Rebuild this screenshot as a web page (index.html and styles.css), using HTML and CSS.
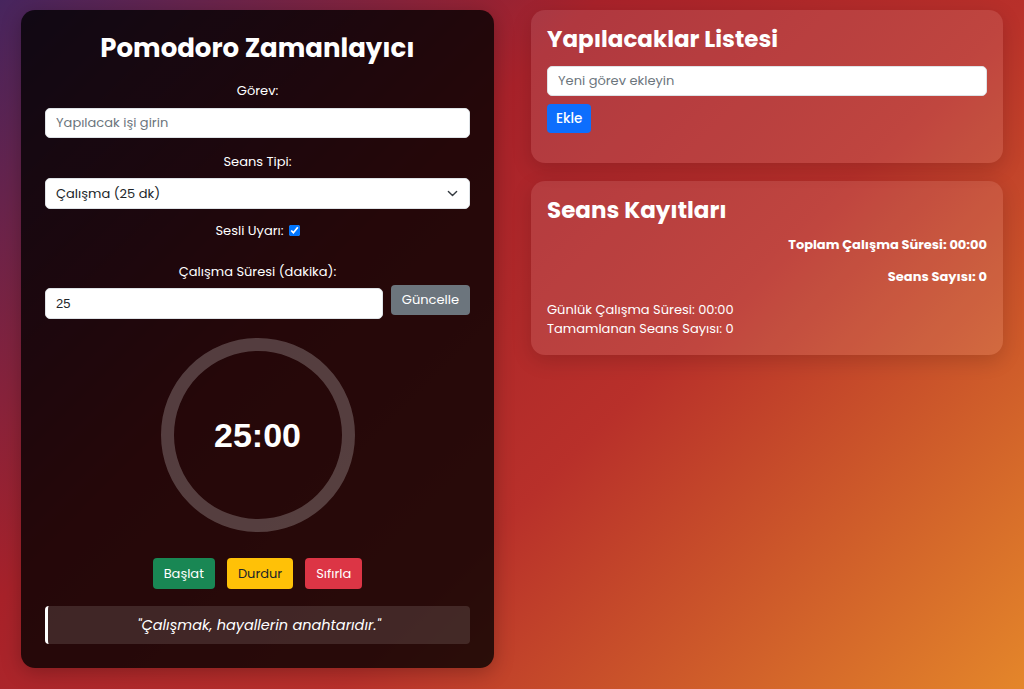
FILE: index.html
```html
<!DOCTYPE html>
<html lang="tr">
<head>
  <meta charset="UTF-8" />
  <meta name="viewport" content="width=device-width, initial-scale=1.0"/>
  <title>Pomodoro Zamanlayıcı</title>
  <link rel="stylesheet" href="styles.css">
</head>
<body>
  <div class="page">
    <div class="timer-card">
      <h1>Pomodoro Zamanlayıcı</h1>

      <label for="task">Görev:</label>
      <input type="text" id="task" placeholder="Yapılacak işi girin">

      <label for="session">Seans Tipi:</label>
      <div class="select-wrap">
        <select id="session">
          <option>Çalışma (25 dk)</option>
          <option>Kısa Mola (5 dk)</option>
          <option>Uzun Mola (15 dk)</option>
        </select>
        <svg class="chevron" width="11" height="11" viewBox="0 0 16 16">
          <path d="M2 5l6 6 6-6" fill="none" stroke="#343a40" stroke-width="2" stroke-linecap="round" stroke-linejoin="round"/>
        </svg>
      </div>

      <div class="sound-row">
        <label for="sound">Sesli Uyarı:</label>
        <input type="checkbox" id="sound" checked>
      </div>

      <label for="minutes">Çalışma Süresi (dakika):</label>
      <div class="duration-row">
        <input type="number" id="minutes" value="25">
        <button class="btn btn-gray">Güncelle</button>
      </div>

      <div class="ring">
        <span class="time">25:00</span>
      </div>

      <div class="controls">
        <button class="btn btn-green">Başlat</button>
        <button class="btn btn-yellow">Durdur</button>
        <button class="btn btn-red">Sıfırla</button>
      </div>

      <div class="quote">"Çalışmak, hayallerin anahtarıdır."</div>
    </div>

    <div class="side">
      <div class="glass-card todo">
        <h2>Yapılacaklar Listesi</h2>
        <input type="text" placeholder="Yeni görev ekleyin">
        <button class="btn btn-blue">Ekle</button>
      </div>

      <div class="glass-card">
        <h2>Seans Kayıtları</h2>
        <p class="stat">Toplam Çalışma Süresi: 00:00</p>
        <p class="stat">Seans Sayısı: 0</p>
        <div class="daily">
          <div>Günlük Çalışma Süresi: 00:00</div>
          <div>Tamamlanan Seans Sayısı: 0</div>
        </div>
      </div>
    </div>
  </div>
</body>
</html>
```

FILE: styles.css
```css
* {
  box-sizing: border-box;
}

body {
  margin: 0;
  min-height: 100vh;
  font-family: 'Poppins', 'Open Sans', sans-serif;
  color: #fff;
  background: linear-gradient(135deg, #47255e 0%, #a8222a 35%, #b8302a 60%, #e4862a 100%);
}

.page {
  display: flex;
  gap: 37px;
  padding: 10px 21px 20px 21px;
  align-items: flex-start;
}

.timer-card {
  flex: 0 0 473px;
  background-color: rgba(0, 0, 0, 0.78);
  border-radius: 14px;
  padding: 19px 24px 24px;
  display: flex;
  flex-direction: column;
  text-align: center;
  box-shadow: 0 4px 20px rgba(0, 0, 0, 0.25);
}

h1 {
  margin: 0 0 13px;
  font-size: 26px;
  line-height: 39px;
  font-weight: 700;
}

label {
  font-size: 13px;
  line-height: 19.5px;
  display: block;
  margin-bottom: 7px;
}

input[type="text"], input[type="number"], select {
  width: 100%;
  height: 30px;
  padding: 0 10px;
  border: 1px solid #dee2e6;
  border-radius: 5px;
  background-color: #fff;
  color: #212529;
  font-family: inherit;
  font-size: 13px;
  outline: none;
}

input::placeholder {
  color: #6c757d;
}

.timer-card input[type="text"] {
  margin-bottom: 14px;
}

.select-wrap {
  position: relative;
  margin-bottom: 12px;
}

select {
  height: 31px;
  appearance: none;
  text-align: left;
}

.chevron {
  position: absolute;
  right: 12px;
  top: 10px;
}

.sound-row {
  display: flex;
  justify-content: center;
  align-items: center;
  gap: 5px;
  margin-bottom: 21px;
}

.sound-row label {
  margin: 0;
}

.sound-row input {
  margin: 0;
  width: 11px;
  height: 11px;
}

.duration-row {
  display: flex;
  gap: 8px;
  align-items: flex-start;
  margin-top: -3px;
}

.duration-row input {
  flex: 1;
  height: 31px;
  margin-top: 3px;
  font-family: 'Liberation Sans', sans-serif;
  font-size: 13px;
  -moz-appearance: textfield;
}

.duration-row input::-webkit-inner-spin-button {
  display: none;
}

.btn {
  border: none;
  border-radius: 4px;
  font-family: inherit;
  font-size: 13px;
  padding: 0 10px;
  height: 30px;
  color: #fff;
  cursor: pointer;
}

.btn-gray { background-color: #6c757d; padding: 0 11px; }
.btn-green { background-color: #198754; }
.btn-yellow { background-color: #ffc107; color: #212529; }
.btn-red { background-color: #dc3545; }
.btn-blue { background-color: #0d6efd; padding: 0 9px; height: 29px; font-size: 13.5px; font-weight: 500; }

.ring {
  width: 194px;
  height: 194px;
  margin: 19px auto 0;
  border: 13px solid rgba(255, 255, 255, 0.22);
  border-radius: 50%;
  display: flex;
  align-items: center;
  justify-content: center;
}

.time {
  font-family: 'Liberation Sans', Arial, sans-serif;
  font-weight: 700;
  font-size: 34px;
}

.controls {
  display: flex;
  justify-content: center;
  gap: 12px;
  margin-top: 26px;
}

.controls .btn {
  height: 31px;
  padding: 0 11px;
}

.quote {
  margin-top: 17px;
  padding: 8px 12px;
  background-color: rgba(255, 255, 255, 0.12);
  border-left: 3px solid #fff;
  border-radius: 4px;
  font-style: italic;
  font-size: 14.5px;
  line-height: 22px;
}

.side {
  flex: 1;
  display: flex;
  flex-direction: column;
  gap: 18px;
}

.glass-card {
  background-color: rgba(255, 255, 255, 0.1);
  border-radius: 14px;
  padding: 12px 16px 17px;
  box-shadow: 0 6px 20px rgba(0, 0, 0, 0.15);
}

.glass-card.todo {
  padding-bottom: 30px;
}

h2 {
  margin: 0 0 8px;
  font-size: 23px;
  line-height: 34px;
  font-weight: 700;
}

.glass-card input[type="text"] {
  display: block;
  margin: 10px 0 8px;
}

.stat {
  text-align: right;
  font-weight: 700;
  font-size: 13px;
  line-height: 19.5px;
  margin: 0 0 12px;
}

.daily {
  font-size: 13px;
  line-height: 19px;
  margin-top: 14px;
}
```
